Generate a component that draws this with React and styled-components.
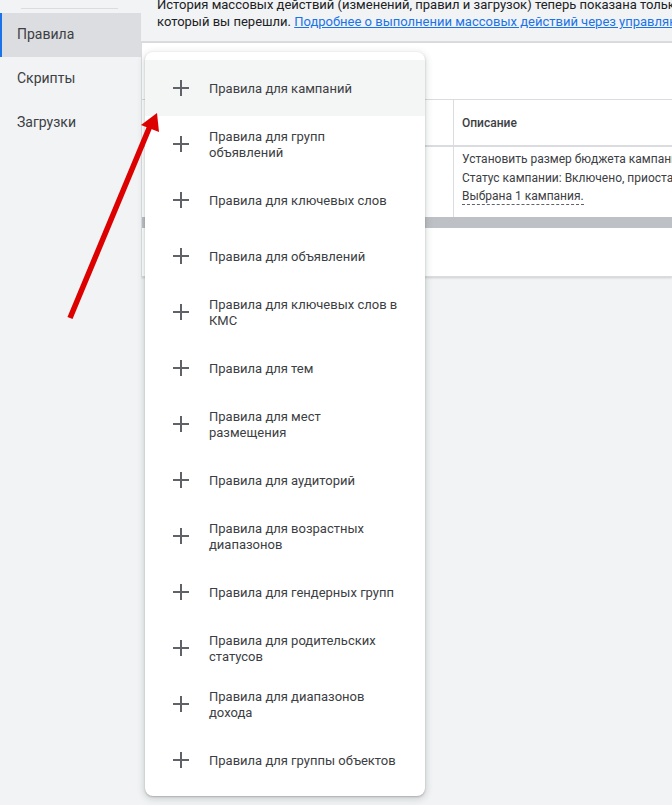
import React from 'react';
import styled, { createGlobalStyle } from 'styled-components';

const GlobalStyle = createGlobalStyle`
  html, body {
    margin: 0;
    padding: 0;
    background: #f1f3f4;
    font-family: Roboto, "Noto Sans", Arial, sans-serif;
  }
  #root {
    height: 805px;
    overflow: hidden;
  }
`;

const Page = styled.div`
  position: relative;
  display: flex;
  height: 805px;
  overflow: hidden;
  background: #f1f3f4;
`;

const Sidebar = styled.nav`
  width: 141px;
  flex-shrink: 0;
  padding-top: 8px;
  background: #f1f3f4;
`;

const SideDivider = styled.div`
  height: 1px;
  margin: 0 23px 4px 21px;
  background: #dadce0;
`;

const SideItem = styled.div`
  height: 44px;
  display: flex;
  align-items: center;
  padding-left: ${p => (p.active ? '15px' : '17px')};
  padding-bottom: 2px;
  box-sizing: border-box;
  border-left: ${p => (p.active ? '2px solid #1a73e8' : 'none')};
  background: ${p => (p.active ? '#dcdde0' : 'transparent')};
  color: #3c4043;
  font-size: 14px;
`;

const Main = styled.main`
  flex: 1;
  min-width: 0;
  overflow: hidden;
`;

const Banner = styled.div`
  height: 41px;
  padding: 0 16px;
  border-bottom: 2px solid #dadce0;
  font-size: 13px;
  line-height: 17px;
  color: #202124;
  overflow: hidden;
`;

const BannerLine = styled.div`
  white-space: nowrap;
  margin-top: ${p => p.offset || 0}px;
`;

const Link = styled.a`
  color: #1a73e8;
  text-decoration: underline;
`;

const Card = styled.section`
  background: #fff;
  border-left: 1px solid #dadce0;
  border-bottom: 1px solid #dadce0;
  box-shadow: 0 1px 2px rgba(60, 64, 67, 0.2);
`;

const Toolbar = styled.div`
  height: 56px;
  border-bottom: 1px solid #dadce0;
`;

const Row = styled.div`
  display: grid;
  grid-template-columns: 311px 1fr;
  height: ${p => p.h}px;
  border-bottom: ${p => p.border}px solid #dadce0;
`;

const Cell = styled.div`
  border-left: ${p => (p.first ? 'none' : '1px solid #dadce0')};
  padding: ${p => (p.header ? '2px 8px 0' : '3px 8px 0')};
  display: flex;
  flex-direction: column;
  justify-content: ${p => (p.header ? 'center' : 'flex-start')};
  font-size: 12px;
  font-weight: ${p => (p.header ? 500 : 400)};
  line-height: 19px;
  color: #3c4043;
  white-space: nowrap;
  overflow: hidden;
`;

const Dashed = styled.span`
  align-self: flex-start;
  line-height: 16px;
  border-bottom: 1px dashed #5f6368;
`;

const Scrollbar = styled.div`
  height: 11px;
  background: #bdc1c6;
`;

const CardFooter = styled.div`
  height: 48px;
`;

const Menu = styled.div`
  position: absolute;
  left: 145px;
  top: 52px;
  width: 280px;
  padding: 8px 0;
  background: #fff;
  border-radius: 8px;
  box-shadow: 0 2px 6px 2px rgba(60, 64, 67, 0.15), 0 1px 2px rgba(60, 64, 67, 0.3);
  z-index: 5;
`;

const MenuItem = styled.div`
  height: 56px;
  display: flex;
  align-items: center;
  padding-left: 28px;
  padding-top: 2px;
  box-sizing: border-box;
  gap: 20px;
  background: ${p => (p.hover ? '#f4f5f5' : 'transparent')};
`;

const MenuText = styled.span`
  width: 192px;
  font-size: 13px;
  line-height: 16px;
  color: #3c4043;
`;

const Plus = () => (
  <svg width="16" height="16" viewBox="0 0 16 16" style={{ flexShrink: 0, marginTop: '-2px' }}>
    <path d="M8 0v16M0 8h16" stroke="#5f6368" strokeWidth="2" fill="none" />
  </svg>
);

const ArrowLayer = styled.svg`
  position: absolute;
  left: 0;
  top: 0;
  pointer-events: none;
  z-index: 10;
`;

const items = [
  'Правила для кампаний',
  'Правила для групп объявлений',
  'Правила для ключевых слов',
  'Правила для объявлений',
  'Правила для ключевых слов в КМС',
  'Правила для тем',
  'Правила для мест размещения',
  'Правила для аудиторий',
  'Правила для возрастных диапазонов',
  'Правила для гендерных групп',
  'Правила для родительских статусов',
  'Правила для диапазонов дохода',
  'Правила для группы объектов',
];

export default function App() {
  return (
    <>
      <GlobalStyle />
      <Page>
        <Sidebar>
          <SideDivider />
          <SideItem active>Правила</SideItem>
          <SideItem>Скрипты</SideItem>
          <SideItem>Загрузки</SideItem>
        </Sidebar>
        <Main>
          <Banner>
            <BannerLine offset={-4}>
              История массовых действий (изменений, правил и загрузок) теперь показана только для аккаунта, в
            </BannerLine>
            <BannerLine>
              который вы перешли. <Link>Подробнее о выполнении массовых действий через управляющий аккаунт</Link>
            </BannerLine>
          </Banner>
          <Card>
            <Toolbar />
            <Row h={45} border={2}>
              <Cell first header />
              <Cell header>Описание</Cell>
            </Row>
            <Row h={70} border={0}>
              <Cell first />
              <Cell>
                <span>Установить размер бюджета кампании: 1 000,00 ₽</span>
                <span>Статус кампании: Включено, приостановлено</span>
                <Dashed>Выбрана 1 кампания.</Dashed>
              </Cell>
            </Row>
            <Scrollbar />
            <CardFooter />
          </Card>
        </Main>
        <Menu>
          {items.map((t, i) => (
            <MenuItem key={t} hover={i === 0}>
              <Plus />
              <MenuText>{t}</MenuText>
            </MenuItem>
          ))}
        </Menu>
        <ArrowLayer width="672" height="805">
          <line x1="70" y1="318" x2="150" y2="126" stroke="#dd0000" strokeWidth="5.5" />
          <polygon points="157,113 141,125 159,132" fill="#dd0000" />
        </ArrowLayer>
      </Page>
    </>
  );
}
